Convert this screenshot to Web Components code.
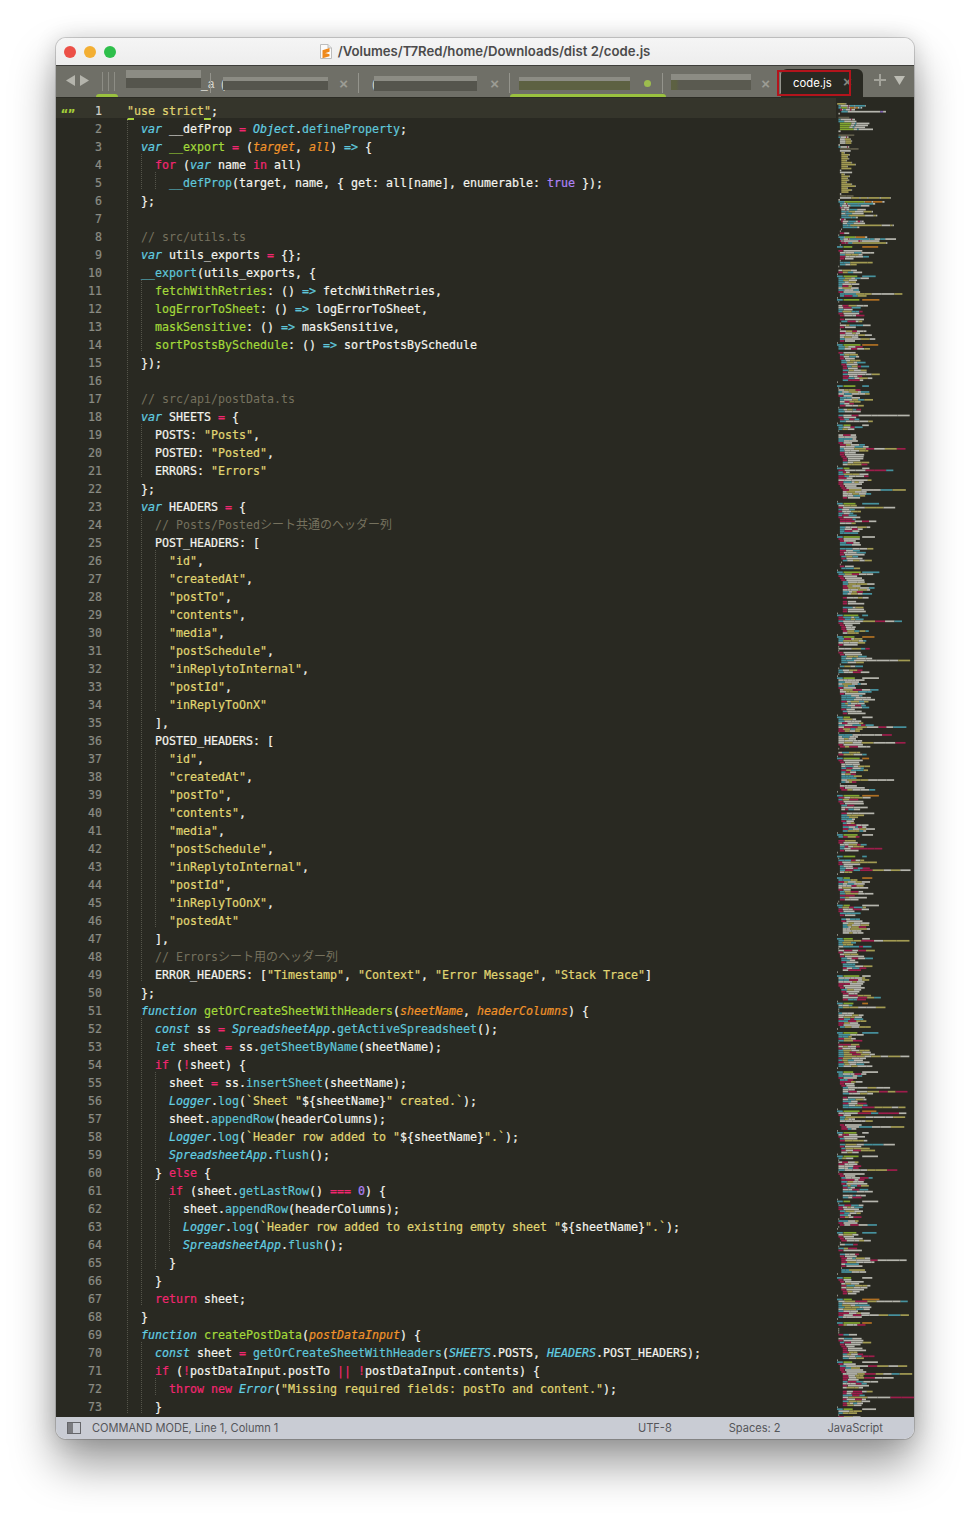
<!DOCTYPE html>
<html lang="en">
<head>
<meta charset="utf-8">
<title>code.js</title>
<style>
  html, body { margin: 0; background: #fff; }
  body { padding: 38px 56px 74px; }
</style>
</head>
<body>
<editor-window>
  <title-bar slot="title">/Volumes/T7Red/home/Downloads/dist 2/code.js</title-bar>
  <tab-bar slot="tabs">
    <editor-tab style="width:93px" pad="8" bar="75" top="8" low="10" shift="-3" tail="_a"></editor-tab>
    <editor-tab style="width:148px" pad="12" bar="105" top="4" low="9" close lead="("></editor-tab>
    <editor-tab style="width:151px" pad="15" bar="103" top="5" low="10" close lead="(" ></editor-tab>
    <editor-tab style="width:153px" pad="9" bar="111" top="4" low="9" olive dot underline></editor-tab>
    <editor-tab style="width:118px" pad="8" bar="80" top="6" low="10" shift="-1" close half></editor-tab>
    <active-tab>code.js</active-tab>
  </tab-bar>
  <code-editor slot="editor"></code-editor>
  <status-bar slot="status"></status-bar>
</editor-window>

<script>
// one entry per line, ‹class text› marks a coloured token
const CODE = [
  '‹b "›‹y use strict›‹b "›;',
  '  ‹t var› __defProp ‹k =› ‹t Object›.‹m defineProperty›;',
  '  ‹t var› ‹f __export› ‹k =› (‹o target›, ‹o all›) ‹m =>› {',
  '    ‹k for› (‹t var› name ‹k in› all)',
  '      ‹m __defProp›(target, name, { get: all[name], enumerable: ‹n true› });',
  '  };',
  '',
  '  ‹c // src/utils.ts›',
  '  ‹t var› utils_exports ‹k =› {};',
  '  ‹m __export›(utils_exports, {',
  '    ‹f fetchWithRetries›: () ‹m =>› fetchWithRetries,',
  '    ‹f logErrorToSheet›: () ‹m =>› logErrorToSheet,',
  '    ‹f maskSensitive›: () ‹m =>› maskSensitive,',
  '    ‹f sortPostsBySchedule›: () ‹m =>› sortPostsBySchedule',
  '  });',
  '',
  '  ‹c // src/api/postData.ts›',
  '  ‹t var› SHEETS ‹k =› {',
  '    POSTS: ‹y "Posts"›,',
  '    POSTED: ‹y "Posted"›,',
  '    ERRORS: ‹y "Errors"›',
  '  };',
  '  ‹t var› HEADERS ‹k =› {',
  '    ‹c // Posts/Posted›‹j シート共通のヘッダー列›',
  '    POST_HEADERS: [',
  '      ‹y "id"›,',
  '      ‹y "createdAt"›,',
  '      ‹y "postTo"›,',
  '      ‹y "contents"›,',
  '      ‹y "media"›,',
  '      ‹y "postSchedule"›,',
  '      ‹y "inReplytoInternal"›,',
  '      ‹y "postId"›,',
  '      ‹y "inReplyToOnX"›',
  '    ],',
  '    POSTED_HEADERS: [',
  '      ‹y "id"›,',
  '      ‹y "createdAt"›,',
  '      ‹y "postTo"›,',
  '      ‹y "contents"›,',
  '      ‹y "media"›,',
  '      ‹y "postSchedule"›,',
  '      ‹y "inReplytoInternal"›,',
  '      ‹y "postId"›,',
  '      ‹y "inReplyToOnX"›,',
  '      ‹y "postedAt"›',
  '    ],',
  '    ‹c // Errors›‹j シート用のヘッダー列›',
  '    ERROR_HEADERS: [‹y "Timestamp"›, ‹y "Context"›, ‹y "Error Message"›, ‹y "Stack Trace"›]',
  '  };',
  '  ‹t function› ‹f getOrCreateSheetWithHeaders›(‹o sheetName›, ‹o headerColumns›) {',
  '    ‹t const› ss ‹k =› ‹t SpreadsheetApp›.‹m getActiveSpreadsheet›();',
  '    ‹t let› sheet ‹k =› ss.‹m getSheetByName›(sheetName);',
  '    ‹k if› (‹k !›sheet) {',
  '      sheet ‹k =› ss.‹m insertSheet›(sheetName);',
  '      ‹t Logger›.‹m log›(‹y `Sheet "›${sheetName}‹y " created.`›);',
  '      sheet.‹m appendRow›(headerColumns);',
  '      ‹t Logger›.‹m log›(‹y `Header row added to "›${sheetName}‹y ".`›);',
  '      ‹t SpreadsheetApp›.‹m flush›();',
  '    } ‹k else› {',
  '      ‹k if› (sheet.‹m getLastRow›() ‹k ===› ‹n 0›) {',
  '        sheet.‹m appendRow›(headerColumns);',
  '        ‹t Logger›.‹m log›(‹y `Header row added to existing empty sheet "›${sheetName}‹y ".`›);',
  '        ‹t SpreadsheetApp›.‹m flush›();',
  '      }',
  '    }',
  '    ‹k return› sheet;',
  '  }',
  '  ‹t function› ‹f createPostData›(‹o postDataInput›) {',
  '    ‹t const› sheet ‹k =› ‹m getOrCreateSheetWithHeaders›(‹t SHEETS›.POSTS, ‹t HEADERS›.POST_HEADERS);',
  '    ‹k if› (‹k !›postDataInput.postTo ‹k ||› ‹k !›postDataInput.contents) {',
  '      ‹k throw› ‹k new› ‹t Error›(‹y "Missing required fields: postTo and content."›);',
  '    }'
]

function parseLine (src) {
  const parts = []
  const re = /‹(\w+) ([^›]*)›|([^‹]+)/g
  let m
  while ((m = re.exec(src))) {
    if (m[3]) parts.push({ cls: 'w', text: m[3] })
    else parts.push({ cls: m[1], text: m[2] })
  }
  return parts
}

const esc = s => s.replace(/&/g, '&amp;').replace(/</g, '&lt;').replace(/>/g, '&gt;')

class EditorWindow extends HTMLElement {
  constructor () {
    super()
    this.attachShadow({ mode: 'open' }).innerHTML = `
      <style>
        :host {
          display: flex;
          flex-direction: column;
          width: 858px;
          height: 1401px;
          border-radius: 10px;
          overflow: hidden;
          box-shadow: 0 0 0 1px rgba(0,0,0,.16), 0 25px 45px rgba(0,0,0,.4), 0 0 22px rgba(0,0,0,.14);
        }
      </style>
      <slot name="title"></slot>
      <slot name="tabs"></slot>
      <slot name="editor"></slot>
      <slot name="status"></slot>`
  }
}

class TitleBar extends HTMLElement {
  constructor () {
    super()
    this.attachShadow({ mode: 'open' }).innerHTML = `
      <style>
        :host {
          display: block;
          position: relative;
          height: 28px;
          box-sizing: border-box;
          background: linear-gradient(#f5f5f5, #ededed);
          border-bottom: 1px solid #3e3e3a;
        }
        .lights {
          position: absolute;
          left: 8px;
          top: 8px;
          display: flex;
          gap: 8px;
        }
        .lights i { display: block; width: 12px; height: 12px; border-radius: 50%; }
        .title {
          display: flex;
          justify-content: center;
          align-items: center;
          gap: 6px;
          height: 26px;
          font: 600 13.150px "Inter", "Liberation Sans", sans-serif;
          color: #4b4b4b;
        }
        svg { display: block; }
      </style>
      <div class="lights">
        <i style="background:#ec5047"></i><i style="background:#f3af33"></i><i style="background:#2ebf4b"></i>
      </div>
      <div class="title">
        <svg width="12" height="15" viewBox="0 0 12 15">
          <path d="M.5.5h7.5l3.5 3.5v10.500h-11z" fill="#fbfbfb" stroke="#bdbdbd"/>
          <path d="M8 .5v3.500h3.500" fill="#e6e6e6" stroke="#bdbdbd"/>
          <path d="M2.500 6.300l7-2.200v2.200l-7 2.200zM2.500 8.300l7 2v2l-7 2zM9.500 7.800l-7 2.300v-1.800l7-2.200z" fill="#ef8a1d"/>
        </svg>
        <span><slot></slot></span>
      </div>`
  }
}

class TabBar extends HTMLElement {
  constructor () {
    super()
    this.attachShadow({ mode: 'open' }).innerHTML = `
      <style>
        :host {
          display: flex;
          height: 32px;
          background: #6f6f67;
          border-bottom: 1px solid #2b2b24;
          box-sizing: border-box;
          position: relative;
        }
        .nav { display: flex; align-items: center; width: 40px; padding: 0 0 3px 10px; box-sizing: border-box; gap: 5px; }
        .slivers {
          width: 22px;
          display: flex;
          gap: 5px;
          padding: 6px 0 6px 6px;
          box-sizing: border-box;
          position: relative;
        }
        .slivers i { display: block; width: 1px; background: #8d8d85; }
        .slivers b {
          position: absolute;
          left: 0; right: 0; bottom: 0;
          height: 3px;
          border-radius: 3px 3px 0 0;
          background: #9ac13f;
        }
        .tabs { display: flex; }
        .tools { display: flex; align-items: center; gap: 8px; padding: 0 0 3px 11px; }
        svg { display: block; }
      </style>
      <div class="nav">
        <svg width="9" height="11" viewBox="0 0 9 11"><path d="M9 0v11L0 5.500z" fill="#b4b4ac"/></svg>
        <svg width="9" height="11" viewBox="0 0 9 11"><path d="M0 0v11l9-5.500z" fill="#b4b4ac"/></svg>
      </div>
      <div class="slivers"><i></i><i></i><i></i><b></b></div>
      <div class="tabs"><slot></slot></div>
      <div class="tools">
        <svg width="12" height="12" viewBox="0 0 12 12"><path d="M5 0h2v5h5v2H7v5H5V7H0V5h5z" fill="#a3a39b"/></svg>
        <svg width="11" height="9" viewBox="0 0 11 9"><path d="M0 0h11L5.500 9z" fill="#bcbcb4"/></svg>
      </div>`
  }
}

// names of the other tabs are blacked out in the screenshot, so bars stand in for them
class EditorTab extends HTMLElement {
  connectedCallback () {
    const a = n => this.getAttribute(n)
    const has = n => this.hasAttribute(n)
    const low = has('half')
      ? 'linear-gradient(90deg,#5d6142 5px,#5a5a50 8px)'
      : has('olive') ? '#5d6142' : '#55554d'
    this.attachShadow({ mode: 'open' }).innerHTML = `
      <style>
        :host {
          display: block;
          position: relative;
          flex: none;
          box-sizing: border-box;
          font: 12px "Liberation Sans", Arial, sans-serif;
          color: #d6d6ce;
        }
        .sep { position: absolute; right: 0; top: 7px; height: 20px; width: 1px; background: #94948c; }
        .row { display: flex; align-items: flex-start; height: 31px; padding-left: ${a('pad')}px; box-sizing: border-box; }
        .bar { flex: none; position: relative; width: ${a('bar')}px; margin-top: ${15 - Number(a('top')) + Number(a('shift') || 0)}px; }
        .bar .t { height: ${a('top')}px; background: #8c8c84; }
        .bar .l { height: ${a('low')}px; background: ${low}; }
        .lead { position: absolute; left: ${Number(a('pad')) - 2}px; top: 11px; line-height: 14px; }
        .tail { line-height: 14px; margin-top: 11px; }
        .x { position: absolute; right: 11px; top: 9px; font: bold 15px/18px "Liberation Sans", Arial, sans-serif; color: #9c9c94; }
        .dot { position: absolute; right: 12px; top: 14px; width: 7px; height: 7px; border-radius: 50%; background: #9dbd4e; }
        .under { position: absolute; left: 0; right: -3px; bottom: 0; height: 3px; border-radius: 3px 3px 0 0; background: #9ac13f; }
      </style>
      <div class="row">
        ${has('lead') ? `<span class="lead">${a('lead')}</span>` : ''}
        <div class="bar"><div class="t"></div><div class="l"></div></div>
        ${has('tail') ? `<span class="tail">${a('tail')}</span>` : ''}
      </div>
      ${has('close') ? '<span class="x">×</span>' : ''}
      ${has('dot') ? '<span class="dot"></span>' : ''}
      ${has('underline') ? '<span class="under"></span>' : ''}
      <i class="sep"></i>`
  }
}

class ActiveTab extends HTMLElement {
  constructor () {
    super()
    this.attachShadow({ mode: 'open' }).innerHTML = `
      <style>
        :host {
          display: flex;
          flex: none;
          position: relative;
          width: 82px;
          height: 29px;
          margin: 3px 0 -1px 0;
          padding: 0 0 2px 12px;
          box-sizing: border-box;
          align-items: center;
          background: #292922;
          border-radius: 6px 6px 0 0;
          color: #fff;
          font: 11.300px "Inter", "Liberation Sans", sans-serif;
        }
        .x { position: absolute; left: 62px; top: 4px; font: bold 15px/18px "Liberation Sans", sans-serif; color: #85857d; }
        .mark {
          position: absolute;
          left: -4px;
          top: 1px;
          width: 74px;
          height: 26px;
          box-sizing: border-box;
          border: 2px solid #b3141c;
        }
      </style>
      <slot></slot>
      <span class="x">×</span>
      <span class="mark"></span>`
  }
}

class CodeEditor extends HTMLElement {
  connectedCallback () {
    const rows = CODE.map((src, i) => {
      const indent = src.match(/^ */)[0].length
      const levels = src === '' ? 1 : Math.floor(indent / 2)
      const guides = '<span class="g"></span>'.repeat(levels)
      const body = parseLine(src.slice(indent)).map(p =>
        p.cls === 'w' ? esc(p.text) : `<span class="${p.cls}">${esc(p.text)}</span>`).join('')
      return `<div class="row${i === 0 ? ' cur' : ''}">` +
        `<span class="mark">${i === 0 ? '“”' : ''}</span>` +
        `<span class="num">${i + 1}</span>` +
        `<span class="code">${guides}${body}</span></div>`
    }).join('')
    this.attachShadow({ mode: 'open' }).innerHTML = `
      <style>
        :host {
          display: flex;
          height: 1319px;
          overflow: hidden;
          background: #292922;
          color: #f4f4ee;
          font: 11.630px/22px "DejaVu Sans Mono", monospace;
          -webkit-text-stroke: .2px;
        }
        .lines { width: 780px; flex: none; overflow: hidden; }
        .row { display: flex; height: 18px; white-space: pre; }
        .row.cur { height: 20px; padding-top: 2px; background: #35352b; box-sizing: border-box; }
        .mark { width: 24px; padding-left: 5px; box-sizing: border-box; color: #a6d13a; font-weight: bold; line-height: 28px; }
        .num { width: 22px; text-align: right; color: #8b8c84; }
        .cur .num { color: #d2d2ca; }
        .code { margin-left: 25px; display: block; }
        .g {
          display: inline-block;
          width: 14px;
          height: 18px;
          vertical-align: top;
          background: repeating-linear-gradient(#55554b 0 1px, transparent 1px 2px) left top / 1px 100% no-repeat;
        }
        .k { color: #f1266f; }
        .t { color: #62cfe2; font-style: italic; }
        .m { color: #5fc6d9; }
        .f { color: #a3d93a; }
        .o { color: #f2942a; font-style: italic; }
        .y { color: #e0d672; }
        .c { color: #75715e; -webkit-text-stroke: 0; }
        .n { color: #ad82f5; }
        .j { color: #75715e; font: 12px/18px "Noto Sans CJK JP", sans-serif; -webkit-text-stroke: 0; }
        .b { color: #e0d672; box-shadow: 0 2px 0 0 #a6d13a; }
      </style>
      <div class="lines">${rows}</div>
      <mini-map></mini-map>`
  }
}

// small overview on the right; the first 73 lines come from CODE, the rest is
// filled in from a seeded generator since the source is not on screen
class MiniMap extends HTMLElement {
  connectedCallback () {
    this.attachShadow({ mode: 'open' }).innerHTML = `
      <style>
        :host { display: block; flex: none; width: 78px; height: 1319px; }
        canvas { display: block; filter: blur(.5px); opacity: .92; }
      </style>
      <canvas width="78" height="1319"></canvas>`
    const ctx = this.shadowRoot.querySelector('canvas').getContext('2d')
    const colors = {
      w: '#c4c4bc', k: '#a81d50', t: '#4a9cab', m: '#4a9cab', f: '#8ab233', o: '#bd7724',
      y: '#aea658', c: '#66634f', n: '#8c6bc4', j: '#66634f', b: '#aea658'
    }
    const cw = 0.72
    const pitch = 1.96
    const x0 = 1
    const y0 = 5
    const put = (line, col, len, cls) => {
      ctx.fillStyle = colors[cls]
      ctx.fillRect(x0 + col * cw, y0 + line * pitch, Math.max(len * cw, 0.7), 1.7)
    }
    CODE.forEach((src, i) => {
      let col = src.match(/^ */)[0].length
      parseLine(src.slice(col)).forEach(p => {
        put(i, col, p.text.length, p.cls)
        col += p.text.length
      })
    })

    let seed = 73
    const rnd = () => {
      seed = (seed * 1664525 + 1013904223) % 4294967296
      return seed / 4294967296
    }
    const pick = (list) => list[Math.floor(rnd() * list.length)]
    let line = CODE.length
    const total = Math.ceil((1319 - y0) / pitch)
    while (line < total) {
      // function header
      put(line, 0, 8, 't')
      put(line, 9, 8 + rnd() * 16, 'f')
      put(line, 9 + 26, 6 + rnd() * 18, pick(['m', 'w', 'o']))
      line++
      const body = 8 + Math.floor(rnd() * 16)
      let depth = 2
      for (let b = 0; b < body && line < total; b++, line++) {
        const r = rnd()
        if (r < 0.04) continue
        if (r < 0.12) {
          depth = Math.max(2, depth - 2)
          put(line, depth, 1, 'w')
          continue
        }
        let col = depth
        if (r < 0.32) {
          put(line, col, 6, 'k')
          put(line, col + 7, 10 + rnd() * 20, 'w')
          depth = Math.min(8, depth + 2)
          continue
        }
        const firstLen = 5 + rnd() * 4
        put(line, col, firstLen, pick(['m', 'm', 'k', 'w']))
        col += firstLen
        const long = rnd() < 0.1
        const pieces = long ? 5 + Math.floor(rnd() * 4) : 2 + Math.floor(rnd() * 3)
        for (let p = 0; p < pieces; p++) {
          const len = (long ? 9 : 4) + rnd() * (long ? 10 : 9)
          put(line, col, len, pick(['w', 'w', 'w', 'm', 'y', 'y', 'k']))
          col += len
          if (col > 90) break
        }
      }
      put(line, 0, 1, 'w')
      line += 1 + Math.floor(rnd() * 2)
    }
  }
}

class StatusBar extends HTMLElement {
  constructor () {
    super()
    this.attachShadow({ mode: 'open' }).innerHTML = `
      <style>
        :host {
          display: flex;
          align-items: center;
          height: 22px;
          padding: 0 31px 0 11px;
          box-sizing: border-box;
          background: #c9ccd4;
          color: #55565a;
          font: 11.050px "Inter", "Liberation Sans", sans-serif;
        }
        svg { display: block; margin-right: 11px; }
        .right { margin-left: auto; display: flex; }
      </style>
      <svg width="14" height="12" viewBox="0 0 14 12">
        <rect x=".5" y=".5" width="13" height="11" fill="none" stroke="#65666a"/>
        <rect x="1" y="1" width="5" height="10" fill="#7b7c80"/>
      </svg>
      <span>COMMAND MODE, Line 1, Column 1</span>
      <div class="right">
        <span style="margin-right:57px">UTF-8</span>
        <span style="margin-right:47px">Spaces: 2</span>
        <span>JavaScript</span>
      </div>`
  }
}

customElements.define('editor-window', EditorWindow)
customElements.define('title-bar', TitleBar)
customElements.define('tab-bar', TabBar)
customElements.define('editor-tab', EditorTab)
customElements.define('active-tab', ActiveTab)
customElements.define('code-editor', CodeEditor)
customElements.define('mini-map', MiniMap)
customElements.define('status-bar', StatusBar)
</script>
</body>
</html>
